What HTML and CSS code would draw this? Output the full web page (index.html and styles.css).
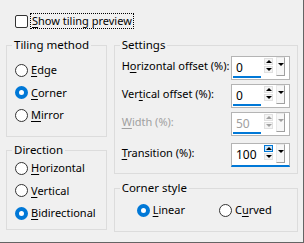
FILE: index.html
```html
<!DOCTYPE html>
<html lang="en">
<head>
    <meta charset="UTF-8">
    <title>Tiling</title>
    <link rel="stylesheet" href="styles.css">
</head>
<body>
    <div class="dialog">
        <!-- Preview toggle -->
        <div class="top-row">
            <label class="check">
                <span class="check-box"></span>
                <span class="focus"><u>S</u>how tiling preview</span>
            </label>
        </div>

        <div class="columns">
            <div class="col-left">
                <fieldset class="group tiling">
                    <legend>Tiling method</legend>
                    <label class="radio"><span class="dot"></span><span><u>E</u>dge</span></label>
                    <label class="radio"><span class="dot on"></span><span><u>C</u>orner</span></label>
                    <label class="radio"><span class="dot"></span><span><u>M</u>irror</span></label>
                </fieldset>

                <fieldset class="group direction">
                    <legend>Direction</legend>
                    <label class="radio"><span class="dot"></span><span><u>H</u>orizontal</span></label>
                    <label class="radio"><span class="dot"></span><span><u>V</u>ertical</span></label>
                    <label class="radio"><span class="dot on"></span><span><u>B</u>idirectional</span></label>
                </fieldset>
            </div>

            <div class="col-right">
                <fieldset class="group settings">
                    <legend>Settings</legend>
                    <div class="field">
                        <span class="field-label">H<u>o</u>rizontal offset (%):</span>
                        <div class="spin">
                            <span class="spin-value">0</span>
                            <span class="spin-arrows"><span class="up"></span><span class="down"></span></span>
                            <span class="spin-drop"></span>
                        </div>
                    </div>
                    <div class="field">
                        <span class="field-label">Ver<u>t</u>ical offset (%):</span>
                        <div class="spin">
                            <span class="spin-value">0</span>
                            <span class="spin-arrows"><span class="up"></span><span class="down"></span></span>
                            <span class="spin-drop"></span>
                        </div>
                    </div>
                    <div class="field disabled">
                        <span class="field-label"><u>W</u>idth (%):</span>
                        <div class="spin">
                            <span class="spin-value">50</span>
                            <span class="spin-arrows"><span class="up"></span><span class="down"></span></span>
                            <span class="spin-drop"></span>
                        </div>
                    </div>
                    <div class="field last">
                        <span class="field-label"><u>T</u>ransition (%):</span>
                        <div class="spin focused">
                            <span class="spin-value">100</span>
                            <span class="spin-arrows"><span class="up hot"></span><span class="down"></span></span>
                            <span class="spin-drop"></span>
                        </div>
                    </div>
                </fieldset>

                <fieldset class="group corner">
                    <legend>Corner style</legend>
                    <div class="radio-row">
                        <label class="radio"><span class="dot on"></span><span><u>L</u>inear</span></label>
                        <label class="radio"><span class="dot"></span><span>C<u>u</u>rved</span></label>
                    </div>
                </fieldset>
            </div>
        </div>
    </div>
</body>
</html>
```

FILE: styles.css
```css
/* General Styles */
* {
    margin: 0;
    padding: 0;
    box-sizing: border-box;
}
body {
    font-family: "Noto Sans", "Open Sans", sans-serif;
    font-size: 11px;
    line-height: 16px;
    color: #000;
    background: #f0f0f0;
}
.dialog {
    width: 304px;
    height: 243px;
    padding: 13px 5px 0 6px;
    border-right: 1px solid #646464;
    border-bottom: 1px solid #646464;
}
u {
    text-decoration: underline;
    text-underline-offset: 2px;
}

/* Checkbox */
.top-row {
    height: 24px;
    padding-left: 9px;
}
.check {
    display: flex;
    align-items: center;
    gap: 2px;
}
.check-box {
    width: 13px;
    height: 13px;
    border: 1px solid #333;
    border-radius: 2px;
    background: #fff;
}
.focus {
    height: 16px;
    padding: 0 1px;
    border: 1px dotted #000;
    line-height: 14px;
}

/* Columns */
.columns {
    display: flex;
    gap: 7px;
}
.col-left {
    width: 101px;
    display: flex;
    flex-direction: column;
    gap: 5px;
}
.col-right {
    width: 185px;
    display: flex;
    flex-direction: column;
    gap: 6px;
}

/* Group boxes */
.group {
    border: 1px solid #dcdcdc;
    display: flex;
    flex-direction: column;
}
.group legend {
    margin-left: 5px;
    padding: 0 2px;
    line-height: 16px;
    font-size: 11.5px;
}
.tiling {
    padding: 9px 0 13px 0;
    gap: 6.5px;
}
.direction {
    padding: 2px 0 8px 0;
    gap: 6.5px;
}
.tiling .radio,
.direction .radio {
    margin-left: 8px;
}
.settings {
    padding: 3px 7px 6px 0;
}
.corner {
    padding: 6px 0 13px 0;
}

/* Radio buttons */
.radio {
    display: flex;
    align-items: center;
    gap: 3px;
    height: 16px;
    white-space: nowrap;
}
.dot {
    width: 13px;
    height: 13px;
    border-radius: 50%;
    border: 1px solid #333;
    background: #fff;
    flex-shrink: 0;
}
.dot.on {
    border: 4px solid #0078d7;
    background: #fff;
}
.radio-row {
    display: flex;
    gap: 34px;
    margin-left: 22px;
}

/* Spin fields */
.field {
    display: flex;
    justify-content: space-between;
    align-items: center;
    height: 24px;
    margin-bottom: 4px;
    padding-left: 7px;
}
.field.last {
    margin-top: 3px;
    margin-bottom: 0;
}
.field-label {
    margin-top: -4px;
    white-space: nowrap;
}
.disabled .field-label,
.disabled .spin-value {
    color: #a0a0a0;
}
.spin {
    display: flex;
    align-items: flex-start;
    width: 59px;
    height: 24px;
    border: 1px solid #b4b4b4;
    background: #fff;
}
.spin-value {
    width: 28px;
    height: 21px;
    margin-left: 1px;
    padding: 3px 0 0 3px;
    border-bottom: 2px solid #0078d7;
    line-height: 16px;
    font-size: 12px;
}
.spin.focused {
    border-bottom: 2px solid #0078d7;
}
.spin.focused .spin-value {
    border-bottom: none;
}
.spin-arrows {
    display: flex;
    flex-direction: column;
    margin: 1px 0 0 3px;
    gap: 1px;
}
.spin-arrows span {
    width: 9px;
    height: 7px;
    display: flex;
    align-items: center;
    justify-content: center;
    background: #f4f4f4;
    border: 1px solid #e0e0e0;
}
.spin-arrows .up::after {
    content: "";
    border-left: 3px solid transparent;
    border-right: 3px solid transparent;
    border-bottom: 3px solid #000;
}
.spin-arrows .down::after {
    content: "";
    border-left: 3px solid transparent;
    border-right: 3px solid transparent;
    border-top: 3px solid #000;
}
.spin-arrows .up.hot {
    background: #cce4f7;
    border-color: #0078d7;
}
.disabled .spin-arrows .up::after {
    border-bottom-color: #a0a0a0;
}
.disabled .spin-arrows .down::after {
    border-top-color: #a0a0a0;
}
.spin-drop {
    width: 9px;
    height: 19px;
    margin-left: 3px;
    background: #f7f7f7;
    border-right: 1px solid #a0a0a0;
    border-bottom: 1px solid #a0a0a0;
    border-top: 1px solid #e8e8e8;
    border-left: 1px solid #e8e8e8;
    display: flex;
    justify-content: center;
    padding-top: 5px;
}
.spin-drop::after {
    content: "";
    height: 0;
    border-left: 3px solid transparent;
    border-right: 3px solid transparent;
    border-top: 3px solid #000;
}
.disabled .spin-drop::after {
    border-top-color: #a0a0a0;
}
```
